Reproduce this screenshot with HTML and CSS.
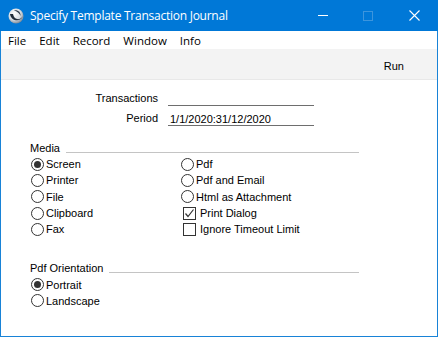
FILE: index.html
```html
<!DOCTYPE html>
<html lang="en">
<head>
    <meta charset="UTF-8">
    <title>Specify Template Transaction Journal</title>
    <link rel="stylesheet" href="styles.css">
</head>
<body>
    <div class="window">
        <div class="titlebar">
            <svg class="app-logo" width="16" height="16" viewBox="0 0 16 16">
                <defs>
                    <radialGradient id="ball" cx="0.4" cy="0.35" r="0.7">
                        <stop offset="0" stop-color="#ffffff"/>
                        <stop offset="0.6" stop-color="#d5dbe2"/>
                        <stop offset="1" stop-color="#6f7d8c"/>
                    </radialGradient>
                </defs>
                <circle cx="8" cy="8" r="7.5" fill="url(#ball)"/>
                <path d="M2 6 C3 13 12 15 15 8 C12 13 6 12 5 6 Z" fill="#1e2a38"/>
                <path d="M6 2.5 C9.5 1.5 13 4 12.5 8 C11.5 5 9 3.5 6 2.5 Z" fill="#2b3848"/>
            </svg>
            <span class="title-text">Specify Template Transaction Journal</span>
            <div class="controls">
                <span class="ctl ctl-min"></span>
                <span class="ctl ctl-max"></span>
                <svg class="ctl ctl-close" width="11" height="11" viewBox="0 0 11 11">
                    <path d="M0.5 0.5 L10.5 10.5 M10.5 0.5 L0.5 10.5" stroke="#fff" stroke-width="1.1"/>
                </svg>
            </div>
        </div>
        <div class="menubar">
            <span class="menu-item">File</span>
            <span class="menu-item">Edit</span>
            <span class="menu-item">Record</span>
            <span class="menu-item">Window</span>
            <span class="menu-item">Info</span>
        </div>
        <div class="toolbar">
            <span class="run-btn">Run</span>
        </div>
        <div class="content">
            <div class="form-rows">
                <div class="form-row">
                    <span class="label">Transactions</span>
                    <span class="field"></span>
                </div>
                <div class="form-row">
                    <span class="label">Period</span>
                    <span class="field">1/1/2020:31/12/2020</span>
                </div>
            </div>

            <div class="group media">
                <div class="group-head"><span>Media</span><span class="rule"></span></div>
                <div class="options">
                    <div class="col">
                        <div class="opt"><span class="radio on"></span>Screen</div>
                        <div class="opt"><span class="radio"></span>Printer</div>
                        <div class="opt"><span class="radio"></span>File</div>
                        <div class="opt"><span class="radio"></span>Clipboard</div>
                        <div class="opt"><span class="radio"></span>Fax</div>
                    </div>
                    <div class="col">
                        <div class="opt"><span class="radio"></span>Pdf</div>
                        <div class="opt"><span class="radio"></span>Pdf and Email</div>
                        <div class="opt"><span class="radio"></span>Html as Attachment</div>
                        <div class="opt chk-opt"><span class="check">
                            <svg width="11" height="11" viewBox="0 0 11 11"><path d="M1.5 5.5 L4 8.5 L9.5 1.5" fill="none" stroke="#333" stroke-width="1.2"/></svg>
                        </span>Print Dialog</div>
                        <div class="opt chk-opt"><span class="check"></span>Ignore Timeout Limit</div>
                    </div>
                </div>
            </div>

            <div class="group orientation">
                <div class="group-head"><span>Pdf Orientation</span><span class="rule"></span></div>
                <div class="col">
                    <div class="opt"><span class="radio on"></span>Portrait</div>
                    <div class="opt"><span class="radio"></span>Landscape</div>
                </div>
            </div>
        </div>
    </div>
</body>
</html>
```

FILE: styles.css
```css
body {
    margin: 0;
    font-family: "Liberation Sans", Arial, sans-serif;
    font-size: 11px;
    color: #000;
}

.window {
    width: 438px;
    height: 337px;
    box-sizing: border-box;
    border: 1px solid #1883d7;
    border-top: none;
    background: #fff;
    display: flex;
    flex-direction: column;
}

.titlebar {
    height: 31px;
    margin: 0 -1px;
    background: #0078d7;
    display: flex;
    align-items: center;
    color: #fff;
    font-family: "Open Sans", sans-serif;
    font-size: 12px;
}

.app-logo {
    margin-left: 8px;
    margin-right: 6px;
}

.title-text {
    letter-spacing: -0.25px;
}

.controls {
    margin-left: auto;
    display: flex;
    align-items: center;
}

.ctl {
    display: block;
}

.ctl-min {
    width: 10px;
    height: 1px;
    background: #fff;
    margin-right: 35px;
}

.ctl-max {
    width: 8px;
    height: 8px;
    border: 1px solid #3c95dd;
    margin-right: 36px;
}

.ctl-close {
    margin-right: 18px;
}

.menubar {
    height: 18px;
    display: flex;
    align-items: center;
    font-family: "Open Sans", sans-serif;
    font-size: 11.5px;
    padding-left: 7px;
}

.menu-item {
    margin-right: 13px;
}

.toolbar {
    height: 31px;
    box-sizing: border-box;
    padding-top: 4px;
    background: #f3f3f3;
    border-bottom: 1px solid #e8e8e8;
    display: flex;
    align-items: center;
    justify-content: flex-end;
    padding-right: 33px;
}

.content {
    flex: 1;
    padding-top: 8px;
}

.form-row {
    display: flex;
    align-items: center;
    height: 20px;
}

.label {
    width: 157px;
    text-align: right;
    margin-right: 10px;
}

.field {
    width: 146px;
    height: 14px;
    line-height: 14px;
    margin-top: 1px;
    padding-left: 2px;
    box-sizing: border-box;
    border-bottom: 1px solid #6e6e6e;
}

.group {
    margin-left: 29px;
    width: 329px;
}

.media {
    margin-top: 12px;
}

.orientation {
    margin-top: 23px;
}

.group-head {
    display: flex;
    align-items: center;
    height: 16px;
}

.rule {
    flex: 1;
    height: 0;
    border-top: 1px solid #c4c4c4;
    margin-left: 6px;
    margin-top: 8px;
}

.options {
    display: flex;
}

.col {
    display: flex;
    flex-direction: column;
}

.options .col:first-child {
    width: 150px;
}

.opt {
    height: 16.3px;
    display: flex;
    align-items: center;
    white-space: nowrap;
}

.radio {
    width: 11px;
    height: 11px;
    border: 1px solid #333;
    border-radius: 50%;
    margin-left: 1px;
    margin-right: 2px;
    position: relative;
    background: #fff;
}

.radio.on::after {
    content: "";
    position: absolute;
    left: 2px;
    top: 2px;
    width: 7px;
    height: 7px;
    border-radius: 50%;
    background: #333;
}

.chk-opt {
    padding-left: 2px;
}

.check {
    width: 11px;
    height: 11px;
    border: 1px solid #333;
    margin-left: 1px;
    margin-right: 4px;
    display: flex;
    align-items: center;
    justify-content: center;
}
```
